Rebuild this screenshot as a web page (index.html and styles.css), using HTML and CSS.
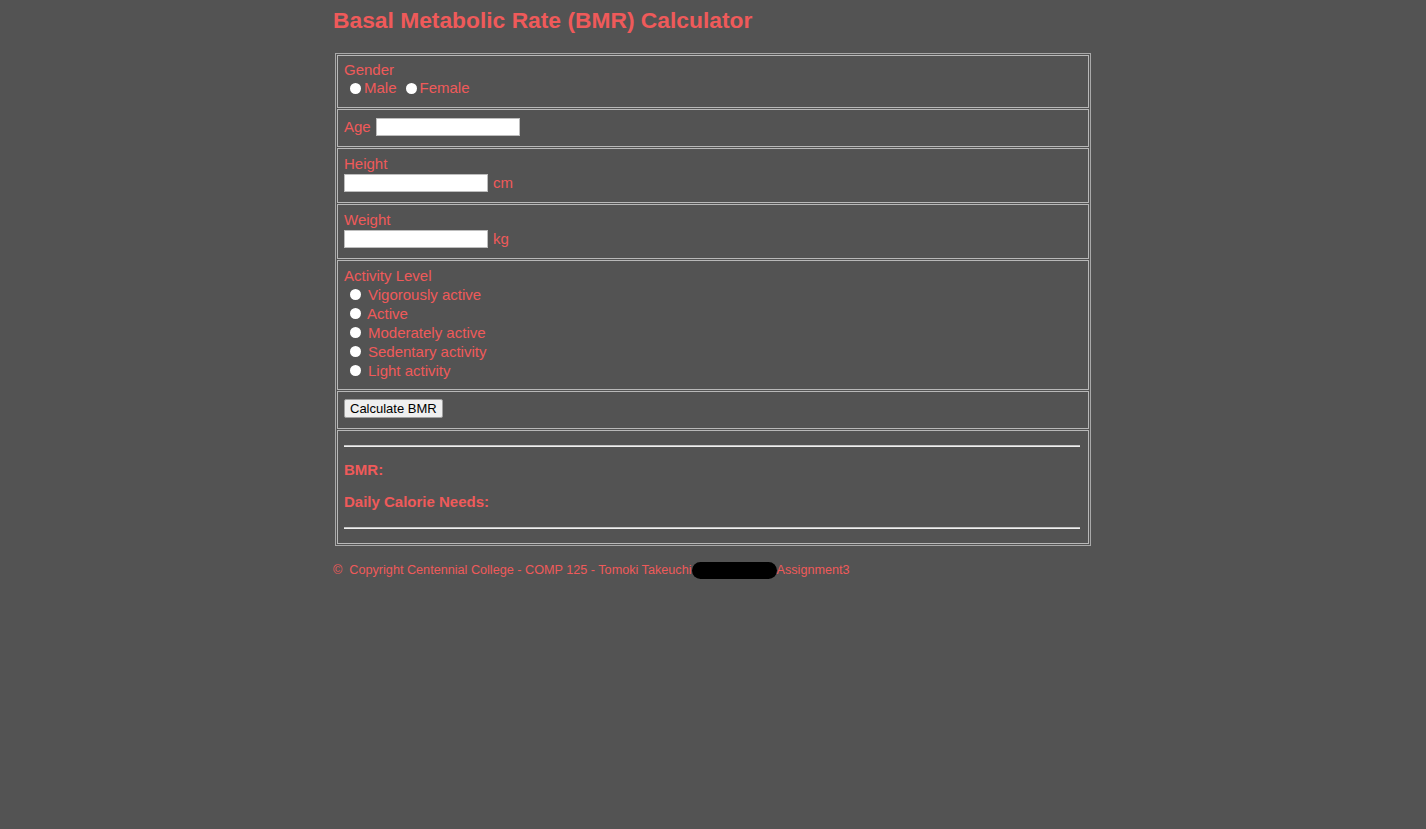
FILE: index.html
```html
<!DOCTYPE html>
<html lang="en">
<head>
<meta charset="utf-8">
<title>BMR Calculator</title>
<link rel="stylesheet" href="styles.css">
</head>
<body>
<div class="page">
  <h1 class="title">Basal Metabolic Rate (BMR) Calculator</h1>
  <table class="calc">
    <tr><td class="cell">
      <div class="label">Gender</div>
      <div class="radio-inline">
        <input type="radio" name="gender" class="radio"><span>Male</span>
        <input type="radio" name="gender" class="radio radio-second"><span>Female</span>
      </div>
    </td></tr>
    <tr><td class="cell">
      <div class="field-row age-row">
        <span>Age</span><input type="text" class="text-input">
      </div>
    </td></tr>
    <tr><td class="cell">
      <div class="label label-tall">Height</div>
      <div class="field-row unit-row">
        <input type="text" class="text-input"><span>cm</span>
      </div>
    </td></tr>
    <tr><td class="cell">
      <div class="label label-tall">Weight</div>
      <div class="field-row unit-row">
        <input type="text" class="text-input"><span>kg</span>
      </div>
    </td></tr>
    <tr><td class="cell activity">
      <div class="label label-tall">Activity Level</div>
      <div class="radio-row"><input type="radio" name="act" class="radio"><span class="opt">Vigorously active</span></div>
      <div class="radio-row"><input type="radio" name="act" class="radio"><span class="opt opt-tight">Active</span></div>
      <div class="radio-row"><input type="radio" name="act" class="radio"><span class="opt">Moderately active</span></div>
      <div class="radio-row"><input type="radio" name="act" class="radio"><span class="opt">Sedentary activity</span></div>
      <div class="radio-row"><input type="radio" name="act" class="radio"><span class="opt">Light activity</span></div>
    </td></tr>
    <tr><td class="cell">
      <div class="button-row"><button class="btn" type="button">Calculate BMR</button></div>
    </td></tr>
    <tr><td class="cell">
      <hr class="rule rule-top">
      <p class="result result-first">BMR:</p>
      <p class="result">Daily Calorie Needs:</p>
      <hr class="rule rule-bottom">
    </td></tr>
  </table>
  <footer class="footer">©&nbsp; Copyright Centennial College - COMP 125 - Tomoki Takeuchi<span class="redact"></span>Assignment3</footer>
</div>
</body>
</html>
```

FILE: styles.css
```css
html, body {
  margin: 0;
  padding: 0;
  background: #535353;
}

body {
  font-family: "Liberation Sans", Arial, sans-serif;
  color: #ef5a5a;
}

.page {
  width: 760px;
  margin: 0 auto;
}

.title {
  margin: 0;
  padding-top: 7px;
  font-size: 22.8px;
  line-height: 26px;
  font-weight: bold;
  color: #ef5a5a;
}

.calc {
  margin: 20px 0 0 2px;
  width: 756px;
  border: 1px solid #a9a9a9;
  border-spacing: 1px;
  font-size: 15px;
}

.cell {
  border: 1px solid #b8b8b8;
  padding: 5px 8px 8px 6px;
  vertical-align: top;
}

.label {
  height: 18px;
  line-height: 18px;
}

.label-tall {
  height: 19px;
  line-height: 19px;
}

.radio-inline {
  display: flex;
  align-items: center;
  height: 20px;
  line-height: 18px;
  padding-bottom: 2px;
  box-sizing: border-box;
}

.radio {
  appearance: none;
  -webkit-appearance: none;
  width: 11px;
  height: 11px;
  border-radius: 50%;
  background: #fff;
  border: none;
  margin: 0 3px 0 6px;
  flex: none;
}

.radio-second {
  margin-left: 9px;
}

.field-row {
  display: flex;
  align-items: center;
  gap: 5px;
}

.age-row {
  height: 23px;
}

.unit-row {
  height: 19px;
  margin-bottom: 2px;
}

.text-input {
  width: 144px;
  height: 18px;
  box-sizing: border-box;
  border: 1px solid #bdbdbd;
  background: #fff;
  margin: 0;
  padding: 0 2px;
}

.activity {
  padding-bottom: 9px;
}

.radio-row {
  display: flex;
  align-items: center;
  height: 19px;
  line-height: 18px;
}

.opt {
  margin-left: 4px;
}

.opt-tight {
  margin-left: 3px;
}

.button-row {
  display: flex;
  align-items: center;
  height: 23px;
}

.btn {
  font-family: "Liberation Sans", Arial, sans-serif;
  font-size: 13px;
  color: #000;
  background: #efefef;
  border: 1px solid #a0a0a0;
  border-radius: 2px;
  height: 19px;
  padding: 0 5px;
  margin: 0;
  line-height: 17px;
}

.rule {
  height: 0;
  border: none;
  border-top: 1px solid #c4c4c4;
  border-bottom: 1px solid #f0f0f0;
  margin: 0;
}

.rule-top {
  margin-top: 9px;
}

.rule-bottom {
  margin: 16px 0 6px;
}

.result {
  margin: 14px 0 0;
  font-weight: bold;
  line-height: 18px;
}

.footer {
  margin-top: 16px;
  font-size: 12.65px;
  line-height: 17px;
  display: flex;
  align-items: center;
  white-space: pre;
}

.redact {
  display: inline-block;
  width: 85px;
  height: 17px;
  background: #000;
  border-radius: 9px;
}
```
